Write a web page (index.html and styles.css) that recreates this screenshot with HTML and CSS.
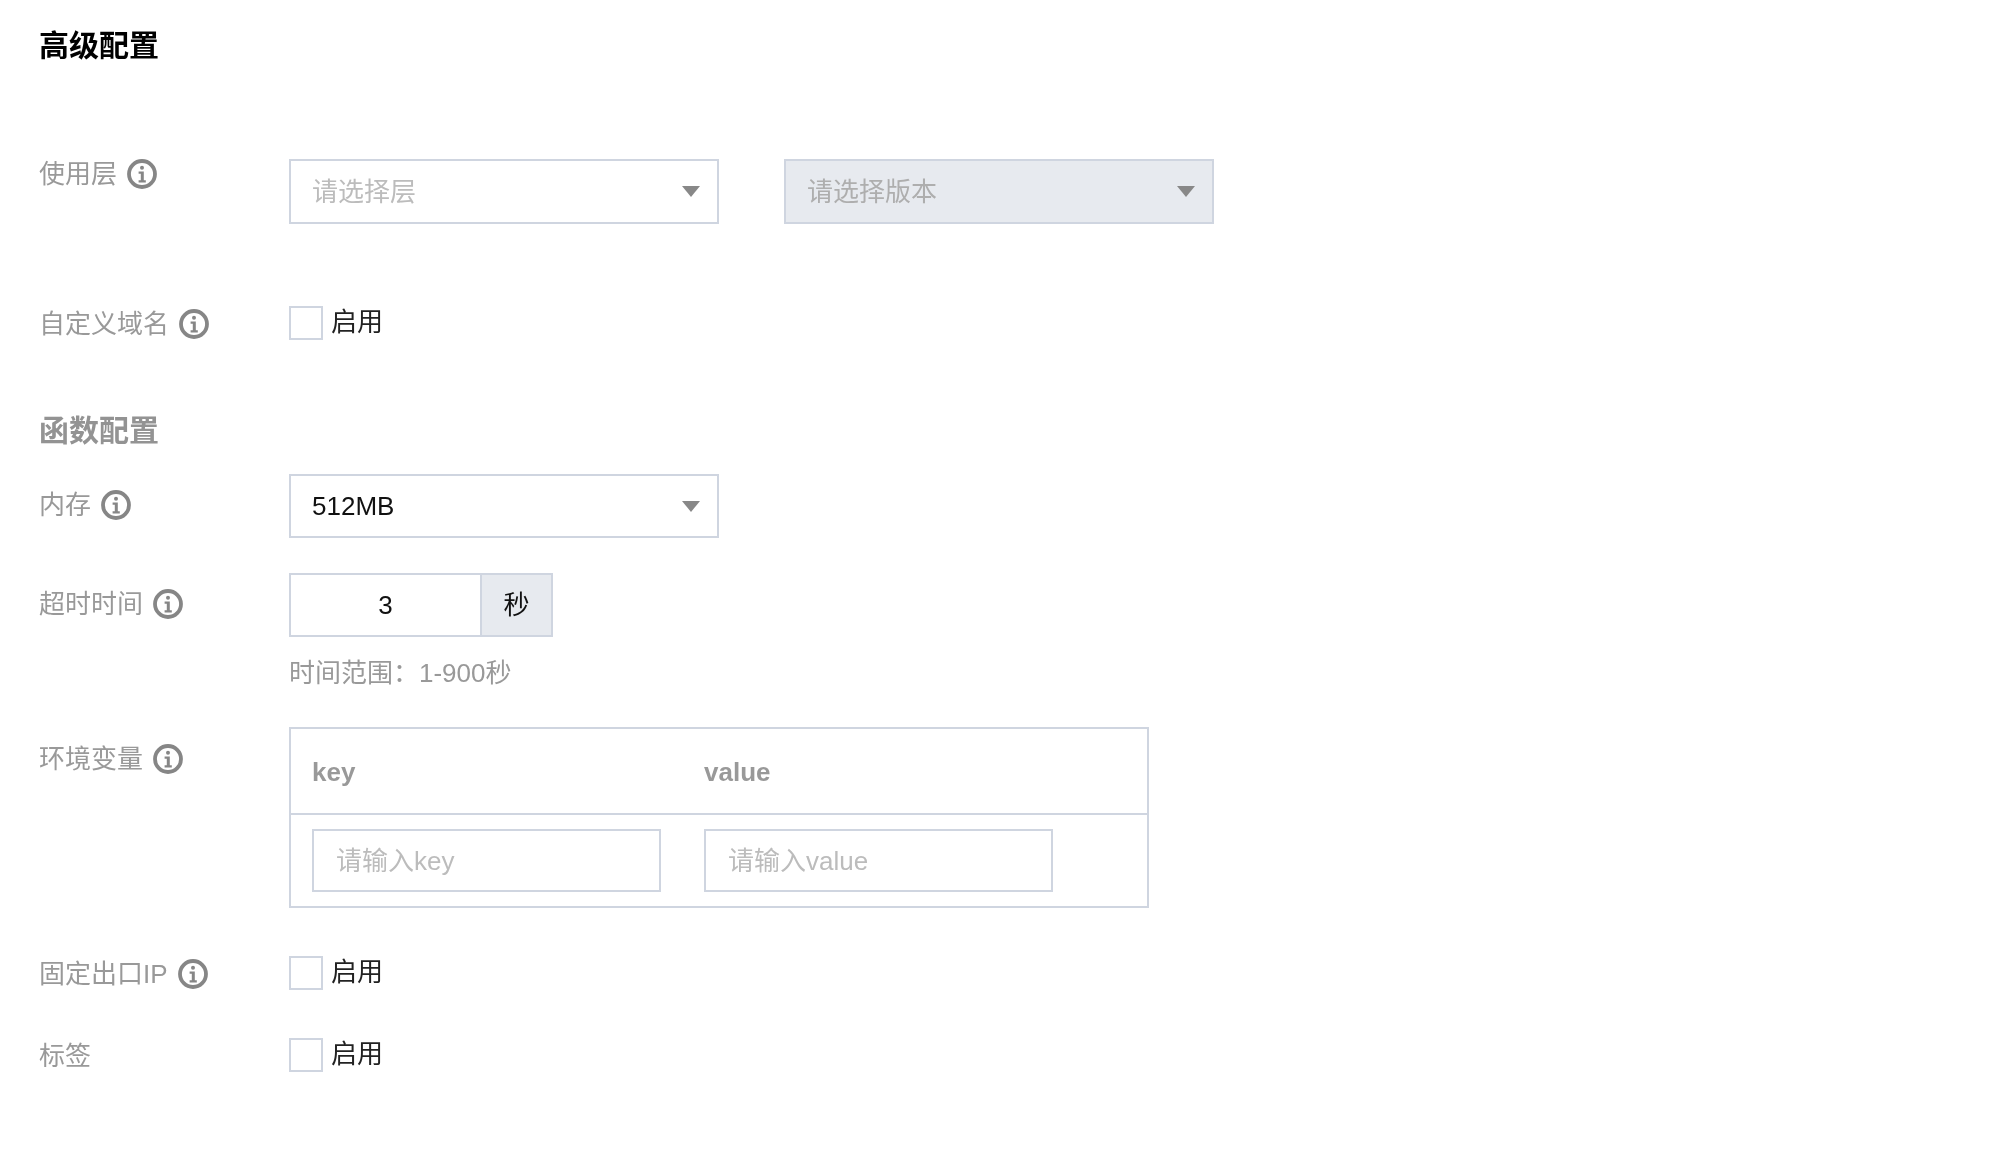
FILE: index.html
```html
<!DOCTYPE html>
<html lang="zh-CN">
<head>
<meta charset="utf-8">
<title>高级配置</title>
<link rel="stylesheet" href="styles.css">
</head>
<body>
<svg class="defs" width="0" height="0" aria-hidden="true">
  <symbol id="info" viewBox="0 0 30 30">
    <circle cx="15" cy="15" r="13" fill="none" stroke="#868686" stroke-width="3.8"/>
    <circle cx="15" cy="8.8" r="2" fill="#868686"/>
    <path d="M11.6 12.6h5.2v8.6h2v2.2h-7.2v-2.2h2.2v-6.4h-2.2z" fill="#868686"/>
  </symbol>
</svg>
<main class="page">
  <h2 class="title">高级配置</h2>

  <div class="row row-layer">
    <div class="label"><span>使用层</span><svg class="info"><use href="#info"/></svg></div>
    <div class="selects">
      <div class="select tall"><span class="placeholder">请选择层</span><i class="arrow"></i></div>
      <div class="select tall disabled"><span class="placeholder">请选择版本</span><i class="arrow"></i></div>
    </div>
  </div>

  <div class="row row-domain">
    <div class="label off-3"><span>自定义域名</span><svg class="info"><use href="#info"/></svg></div>
    <label class="check"><i class="box"></i><span>启用</span></label>
  </div>

  <h2 class="title sub">函数配置</h2>

  <div class="row row-memory">
    <div class="label off-16"><span>内存</span><svg class="info"><use href="#info"/></svg></div>
    <div class="select"><span>512MB</span><i class="arrow"></i></div>
  </div>

  <div class="row row-timeout">
    <div class="label off-16"><span>超时时间</span><svg class="info"><use href="#info"/></svg></div>
    <div>
      <div class="number"><div class="num-value">3</div><div class="num-unit">秒</div></div>
      <p class="hint">时间范围：1-900秒</p>
    </div>
  </div>

  <div class="row row-env">
    <div class="label off-17"><span>环境变量</span><svg class="info"><use href="#info"/></svg></div>
    <div class="env">
      <div class="env-head"><b>key</b><b>value</b></div>
      <div class="env-body">
        <div class="text-input"><span class="placeholder">请输入key</span></div>
        <div class="text-input"><span class="placeholder">请输入value</span></div>
      </div>
    </div>
  </div>

  <div class="row row-ip">
    <div class="label off-3"><span>固定出口IP</span><svg class="info"><use href="#info"/></svg></div>
    <label class="check"><i class="box"></i><span>启用</span></label>
  </div>

  <div class="row row-tag">
    <div class="label off-3"><span>标签</span></div>
    <label class="check"><i class="box"></i><span>启用</span></label>
  </div>
</main>
</body>
</html>
```
FILE: styles.css
```css
* { box-sizing: border-box; }
html, body { margin: 0; background: #fff; }
body {
  font-family: "Liberation Sans", "Noto Sans CJK SC", sans-serif;
  font-size: 26px;
  color: #111;
}
.defs { position: absolute; }
.page { padding: 28px 0 0 39px; filter: blur(0.4px); }
.title {
  margin: 0;
  font-size: 30px;
  line-height: 36px;
  font-weight: 700;
  color: #000;
}
.title.sub { margin-top: 73px; color: #939393; }
.row { display: grid; grid-template-columns: 250px 1fr; align-items: start; }
.row-layer { margin-top: 95px; }
.row-domain { margin-top: 82px; }
.row-memory { margin-top: 25px; }
.row-timeout { margin-top: 35px; }
.row-env { margin-top: 39px; }
.row-ip { margin-top: 48px; }
.row-tag { margin-top: 48px; }

.label {
  display: flex;
  align-items: center;
  gap: 10px;
  height: 30px;
  line-height: 30px;
  color: #999;
}
.off-3 { margin-top: 3px; }
.off-16 { margin-top: 16px; }
.off-17 { margin-top: 17px; }
.info { width: 30px; height: 30px; flex: none; }

.selects { display: flex; gap: 65px; }
.select {
  display: flex;
  align-items: center;
  justify-content: space-between;
  width: 430px;
  height: 64px;
  padding: 0 17px 0 21px;
  border: 2px solid #cfd5e0;
  background: #fff;
  line-height: 30px;
}
.select.tall { height: 65px; }
.select.disabled { background: #e7eaef; }
.placeholder { color: #bcbcbc; }
.select.disabled .placeholder { color: #aeaeae; }
.arrow {
  width: 0;
  height: 0;
  border-left: 9px solid transparent;
  border-right: 9px solid transparent;
  border-top: 11px solid #888;
}

.check { display: flex; align-items: center; gap: 8px; height: 34px; }
.box { width: 34px; height: 34px; border: 2px solid #cfd5e0; background: #fff; }
.check span { line-height: 30px; margin-top: -2px; color: #222; }

.number { display: flex; width: 264px; height: 64px; border: 2px solid #cfd5e0; line-height: 30px; }
.num-value {
  flex: 1;
  display: flex;
  align-items: center;
  justify-content: center;
}
.num-unit {
  display: flex;
  align-items: center;
  justify-content: center;
  width: 71px;
  border-left: 2px solid #cfd5e0;
  background: #e7eaef;
}
.hint { margin: 21px 0 0; line-height: 30px; color: #999; }

.env { width: 860px; border: 2px solid #cfd5e0; }
.env-head {
  display: grid;
  grid-template-columns: 392px 1fr;
  align-items: center;
  height: 86px;
  padding: 2px 21px 0;
  border-bottom: 2px solid #cfd5e0;
  color: #999;
  line-height: 30px;
}
.env-body { display: flex; gap: 43px; padding: 14px 21px; }
.text-input {
  display: flex;
  align-items: center;
  width: 349px;
  height: 63px;
  padding: 0 22px;
  border: 2px solid #cfd5e0;
  line-height: 30px;
}
```
